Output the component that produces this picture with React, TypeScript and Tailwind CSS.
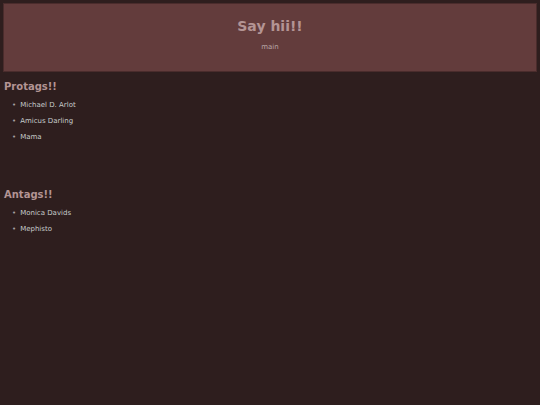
export default function App() {
  const protags = ['Michael D. Arlot', 'Amicus Darling', 'Mama']
  const antags = ['Monica Davids', 'Mephisto']

  return (
    <div className="min-h-[405px] w-full bg-[#2e1e1e] p-[3px] font-['DejaVu_Sans',sans-serif]">
      {/* Header */}
      <header className="flex h-[69px] flex-col items-center border border-[#4a2c2c] bg-[#633c3c] pt-[13px]">
        <h1 className="text-[14px] font-bold leading-[18px] text-[#b39494]">Say hii!!</h1>
        <p className="mt-[8px] text-[7px] leading-[9px] text-[#b8a8a8]">main</p>
      </header>

      {/* Protags */}
      <section className="mt-[7px]">
        <h2 className="pl-px text-[10px] font-bold leading-[16px] text-[#b39494]">Protags!!</h2>
        <ul className="mt-[6px] space-y-[7px] pl-[9px]">
          {protags.map((name) => (
            <li key={name} className="flex items-center gap-[4px] text-[7px] leading-[9px] text-[#c6cbcb]">
              <span className="text-[#a8a0a0]">•</span>
              {name}
            </li>
          ))}
        </ul>
      </section>

      {/* Antags */}
      <section className="mt-[45px]">
        <h2 className="pl-px text-[10px] font-bold leading-[16px] text-[#b39494]">Antags!!</h2>
        <ul className="mt-[6px] space-y-[7px] pl-[9px]">
          {antags.map((name) => (
            <li key={name} className="flex items-center gap-[4px] text-[7px] leading-[9px] text-[#c6cbcb]">
              <span className="text-[#a8a0a0]">•</span>
              {name}
            </li>
          ))}
        </ul>
      </section>
    </div>
  )
}
